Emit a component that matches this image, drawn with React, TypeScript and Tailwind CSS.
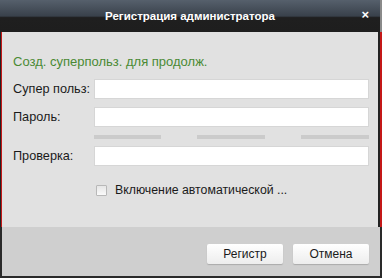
import React from 'react';

const font = { fontFamily: '"Liberation Sans", Arial, sans-serif' };

function Field({ label }: { label: string }) {
  return (
    <div className="flex items-center h-[20px]">
      <div className="w-[93px] shrink-0 pl-[12px] text-[12.7px] text-[#1a1a1a] leading-none whitespace-nowrap">{label}</div>
      <div className="w-[275px] shrink-0 h-[20px] bg-white border border-[#d6d6d6]" />
    </div>
  );
}

export default function App() {
  return (
    <div className="w-[382px] h-[278px] flex flex-col bg-[#1a1a1a] overflow-hidden" style={font}>
      {/* title bar */}
      <div className="relative h-[32px] shrink-0 bg-[linear-gradient(#56606c_0%,#39414b_50%,#1f1f1f_55%,#1e1e1e_100%)] border-r-2 border-[#8a8a8a] flex items-center justify-center">
        <span className="text-white font-bold text-[11.5px] mt-[1px]">Регистрация администратора</span>
        <span className="absolute right-[11px] top-[8px] text-white font-bold text-[13px] leading-none">×</span>
      </div>

      {/* body */}
      <div className="flex-1 flex flex-col bg-[#e1e1e1] border-l border-r-2 border-l-[#222] border-r-[#c41818] shadow-[inset_1px_0_0_#c41818,inset_-2px_0_0_#222]">
        <div className="pl-[12px] pt-[23px] text-[13px] text-[#4a8a34] leading-none h-[47px] whitespace-nowrap">
          Созд. суперпольз. для продолж.
        </div>
        <Field label="Супер польз:" />
        <div className="h-[8px] shrink-0" />
        <Field label="Пароль:" />
        <div className="flex pl-[93px] mt-[8px] gap-[36px] h-[4px] shrink-0">
          <div className="w-[67px] bg-[#cbcbcb]" />
          <div className="w-[68px] bg-[#cbcbcb]" />
          <div className="w-[68px] bg-[#cbcbcb]" />
        </div>
        <div className="h-[7px] shrink-0" />
        <Field label="Проверка:" />
        <div className="flex items-center pl-[95px] mt-[18px]">
          <div className="w-[11px] h-[11px] bg-[linear-gradient(#e6e6e6,#fafafa)] border border-[#b8b8b8] rounded-[1px]" />
          <span className="ml-[8px] text-[12.3px] text-[#1a1a1a] leading-none whitespace-nowrap">Включение автоматической ...</span>
        </div>
        <div className="flex-1" />
      </div>

      {/* footer */}
      <div className="h-[51px] shrink-0 bg-[#cfcfcf] border-l-2 border-r-2 border-b-2 border-[#2a2a2a] flex items-start justify-end gap-[10px] pt-[17px] pr-[11px]">
        <button className="w-[76px] h-[20px] text-[12px] text-[#1a1a1a] rounded-[2px] bg-[linear-gradient(#ffffff,#ededed)] shadow-[0_1px_1px_#aaa]">
          Регистр
        </button>
        <button className="w-[76px] h-[20px] text-[12px] text-[#1a1a1a] rounded-[2px] bg-[linear-gradient(#ffffff,#ededed)] shadow-[0_1px_1px_#aaa]">
          Отмена
        </button>
      </div>
    </div>
  );
}
